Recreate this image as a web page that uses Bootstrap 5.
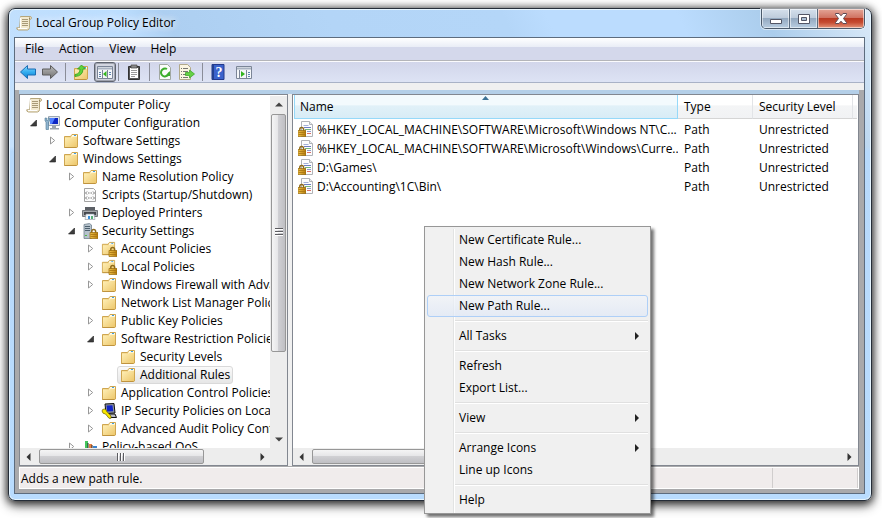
<!DOCTYPE html>
<html lang="en">
<head>
<meta charset="utf-8">
<meta name="viewport" content="width=device-width, initial-scale=1">
<title>Local Group Policy Editor</title>
<link href="https://cdn.jsdelivr.net/npm/bootstrap@5.3.0/dist/css/bootstrap.min.css" rel="stylesheet">
<style>
  body { font: 12px/18px "Open Sans", "Noto Sans", sans-serif; color: #000; background: #fff; padding: 8px 10px 17px 8px; }
  svg { display: block; flex: none; }
  button { color: inherit; border: 0; padding: 0; background: none; }
  ul { list-style: none; margin: 0; padding: 0; }
  .ico { width: 16px; height: 16px; }

  /* window frame */
  .win { border: 1px solid #252d38; border-radius: 7px; padding: 0 6px 6px 5px; box-shadow: inset 0 0 0 1px #e6f5ff, 0 1px 9px 1px rgba(0,0,0,.75), 0 5px 12px rgba(0,0,0,.45);
    background: linear-gradient(#dcedfd00 28%, #b7d9fb 29%, #b9dcfe), linear-gradient(65deg, #d9ecfd 0 5%, #c3e0fd 17%, #bcdefe 31%, #adcff1 35%, #b3d5f7 50%, #b4d6f8 66%, #bbdcfe 70%, #bbdcfe 82%, #abcdec 90%, #dbeaf8); }
  .titlebar { height: 28px; padding-left: 2px; }
  .titlebar h1 { font-size: 12px; line-height: 28px; font-weight: 400; margin: 0; text-shadow: 0 0 8px #fff, 0 0 8px #fff; }
  .caps { height: 20px; border: 1px solid #4b5a6b; border-top: 0; border-radius: 0 0 5px 5px; box-shadow: 0 0 0 1px #ffffff88; overflow: hidden; }
  .caps button { width: 28px; display: flex; align-items: center; justify-content: center; background: linear-gradient(#d5e0ec, #bdcbdb 48%, #94a9c0 50%, #b8cde1); box-shadow: inset 0 0 0 1px #ffffff88; border-right: 1px solid #5b6c7f; }
  .caps .cap-close { width: 46px; border: 0; background: linear-gradient(#e4a698, #cf705f 48%, #b93a23 50%, #c54a30 70%, #e3957a); }
  .client { border: 1px solid #5d6c7e; background: #a9a9ab; min-height: 0; }

  /* menu bar and toolbar */
  .menubar { height: 23px; padding-left: 3px; border-bottom: 1px solid #b4b5b9; background: linear-gradient(#fff, #e9edf6 9px, #d4d8eb 9px, #d4d8eb); }
  .menubar button { padding: 1px 7px 0; margin-right: 1px; }
  .tools { height: 23px; padding: 0 2px; border-top: 1px solid #fbfbfd; border-bottom: 1px solid #a9b2c6; background: linear-gradient(#d2d6ea, #dde3f4); }
  .tools button { display: flex; width: 22px; height: 20px; padding-top: 1px; align-items: center; justify-content: center; }
  .tools button[aria-pressed="true"] { margin: 0 2px; padding: 0; border: 1px solid #5f646f; border-radius: 3px; background: #d3d6e0; box-shadow: inset 0 0 0 1px #9fa3ae; }
  .tools .split { width: 1px; height: 18px; background: #8a8d98; }
  .strip { height: 7px; background: #f0f0f0; }
  .panes { min-height: 0; padding: 0 5px 0 4px; gap: 4px; background: linear-gradient(90deg, #a9a9ab 4px, transparent 4px calc(100% - 5px), #a9a9ab calc(100% - 5px)), linear-gradient(#b4cfe8 4px, #f0f0f0 4px); }
  .pane { margin-top: 4px; border: 1px solid #828790; background: #fff; min-height: 0; overflow: hidden; }
  .pane-tree { width: 269px; flex: none; }

  /* tree */
  .tree-view { min-height: 0; overflow: hidden; padding: 1px 0 0 1px; }
  .tree-view ul ul { padding-left: 19px; }
  .tree-view > ul > li > ul { padding-left: 9px; }
  .node { height: 18px; white-space: nowrap; }
  .node a { display: flex; align-items: center; height: 18px; gap: 4px; padding: 0 2px; border: 1px solid transparent; border-radius: 3px; color: #000; text-decoration: none; }
  .node a.picked { border-color: #d9d9d9; background: linear-gradient(#fafafa, #e6e6e6); }
  .twist { width: 11px; height: 18px; flex: none; display: flex; align-items: center; }
  .twist svg { width: 8px; height: 9px; }

  /* scroll bars */
  .sb { background: #ededed; flex: none; }
  .sb button { display: flex; align-items: center; justify-content: center; width: 17px; height: 17px; }
  .sb-v { width: 17px; margin-top: 1px; }
  .sb-h { height: 17px; }
  .grip { border: 1px solid #979797; border-radius: 2px; display: flex; align-items: center; justify-content: center; }
  .sb-v .grip { margin: 1px; height: 238px; background: linear-gradient(90deg, #f5f5f5, #e6e6e8 45%, #cfcfd3 50%, #bfbfc3); }
  .sb-h .grip { margin: 1px 0 1px 2px; width: 165px; background: linear-gradient(#f5f5f5, #e6e6e8 45%, #d0d0d3 50%, #bfbfc3); }
  .sb-h .grip.wide { width: 290px; }

  /* list */
  .list-view { padding: 0 1px; min-height: 0; }
  .rules { width: 100%; table-layout: fixed; border-collapse: separate; border-spacing: 0; margin: 0; }
  .rules th { position: relative; height: 24px; padding: 2px 0 0 6px; font-weight: 400; line-height: 18px; background: linear-gradient(#fff 45%, #f4f5f6 46%, #f1f2f4); border-bottom: 1px solid #d5d5d5; border-right: 1px solid #e2e4e7; }
  .rules th.by { background: linear-gradient(#f3fafd 45%, #e1f1f8 46%, #d8ecf6); border: 1px solid #96d9f9; border-top: 0; padding-left: 5px; }
  .rules th.by svg { position: absolute; top: 1px; left: 50%; margin-left: -4px; }
  .rules td { height: 19px; padding: 0 0 0 6px; line-height: 19px; white-space: nowrap; overflow: hidden; }
  .rules td:first-child { padding-left: 4px; }
  .rules td:first-child div { gap: 3px; }
  .rules tbody::before { content: ""; display: block; height: 1px; }
  .c-type { width: 75px; } .c-level { width: 100px; } .c-end { width: 4px; }

  /* status bar */
  .status { margin: 1px 5px 4px 4px; height: 22px; border: 1px solid #fff; background: #f0ecec; }
  .status span { padding-left: 1px; line-height: 21px; }
  .status .cell { border-right: 1px solid #d0cdcd; }
  .status .cell-end { width: 85px; }

  /* context menu */
  .ctx.dropdown-menu { --bs-dropdown-font-size: 12px; position: absolute; left: 424px; top: 226px; width: 227px; min-width: 0; padding: 2px; border: 1px solid #979797; border-radius: 0; box-shadow: 3px 3px 3px #0000008c; color: #000;
    background: linear-gradient(90deg, #f1f1f1 26px, #e2e3e3 26px 27px, #fff 27px 28px, #f0f0f0 28px) 2px 2px no-repeat #f0f0f0; }
  .ctx .dropdown-item { display: flex; justify-content: space-between; align-items: center; height: 22px; padding: 0 6px 0 31px; line-height: 20px; color: #000; border: 1px solid transparent; border-radius: 3px; background: none; }
  .ctx .dropdown-item.hot { border-color: #aecff7; background: linear-gradient(#f1f4f9b0, #dfe8f7b0); }
  .ctx .dropdown-divider { height: 2px; margin: 3px 0 3px 28px; border-top: 1px solid #e0e0e0; background: #fff; opacity: 1; }
</style>
<script src="https://cdn.jsdelivr.net/npm/bootstrap@5.3.0/dist/js/bootstrap.bundle.min.js"></script>
</head>
<body class="vh-100 overflow-hidden">
<svg width="0" height="0" class="position-absolute" aria-hidden="true">
  <defs>
    <linearGradient id="gf" x2="1" y2="1"><stop stop-color="#fff0b8"/><stop offset="1" stop-color="#edc76b"/></linearGradient>
    <linearGradient id="gb" x2="0" y2="1"><stop stop-color="#8fdcff"/><stop offset=".5" stop-color="#35aef0"/><stop offset="1" stop-color="#0b7fd0"/></linearGradient>
    <linearGradient id="gg" x2="0" y2="1"><stop stop-color="#bbb"/><stop offset="1" stop-color="#707070"/></linearGradient>
    <linearGradient id="gl" x2="1" y2="0"><stop stop-color="#f0c44c"/><stop offset="1" stop-color="#b57b0a"/></linearGradient>
  </defs>
  <symbol id="scroll" viewBox="0 0 16 16"><path d="M4.500 1.500h9.500q1.500 0 1.500 1.500t-2 1.500v8q0 2-2 2.500h-9q-2-.3-1.800-2.200h3z" fill="#f3ead0" stroke="#b5a67c"/><path d="M4.500 2.500v10.500M2 13.500h9" stroke="#fff" fill="none"/><path d="M6 4.500h6M6 6.500h6M6 8.500h6M6 10.500h6" stroke="#a89a78"/><path d="M13.500 4.500v-2" stroke="#94855c"/></symbol>
  <symbol id="folder" viewBox="0 0 16 16"><path d="M1.500 3.500h6l1.500-2h5.500v12.500l-1 .5h-12z" fill="#f0cf7c" stroke="#cfa650"/><path d="M9 2h5v3H8z" fill="#fffbe8"/><path d="M11 2.500h2" stroke="#3e9fe8"/><path d="M2 4.500h6.500l1-.8h4.500v10.300H2z" fill="url(#gf)"/><path d="M1.500 14.500h12" stroke="#bf933e"/></symbol>
  <symbol id="padlock" viewBox="0 0 16 16"><path d="M9.800 10V8.300q0-1.800 1.900-1.800t1.900 1.800V10" fill="none" stroke="#8e6b1c" stroke-width="1.500"/><path d="M8 9.500h8v6H8z" fill="url(#gl)" stroke="#96680c" stroke-width=".7"/><path d="M8.500 11.500h7M8.500 13.500h7" stroke="#a87312" stroke-width=".8"/></symbol>
  <symbol id="lockfolder" viewBox="0 0 16 16"><use href="#folder" width="15" height="15"/><use href="#padlock"/></symbol>
  <symbol id="computer" viewBox="0 0 16 16"><path d="M4.500 1.500h11v9h-11z" fill="#dfe4ea" stroke="#9ea9b5"/><path d="M6 3h8v6H6z" fill="#0c26c4"/><path d="M6 3h5L8 9H6z" fill="#4f7fff"/><path d="M8 11h4v2H8zM6 13h9v1.500H6z" fill="#9aa4ae"/><path d="M1 3v3l1 1v7.500h2.500V7l1-1V3H4v2.500H2.500V3z" fill="#8fb4cf" stroke="#4f7896" stroke-width=".6"/></symbol>
  <symbol id="script" viewBox="0 0 16 16"><path d="M2.500 1.500h9l2 2v11h-11z" fill="#fcfcfc" stroke="#a3a3a3"/><path d="M5 4.500L3.500 6 5 7.500M11 4.500L12.500 6 11 7.500M6 6h1.500M8.500 6H10M5 9.500L3.500 11 5 12.500M11 9.500l1.500 1.500-1.500 1.500M6 11h1.500M8.500 11H10" fill="none" stroke="#777"/></symbol>
  <symbol id="printer" viewBox="0 0 16 16"><path d="M3 2h10v4H3z" fill="#5c6066"/><path d="M.5 5.500h15v6H.5z" fill="#a3a6aa" stroke="#74777c"/><path d="M2 7h12v3H2z" fill="#45484d"/><path d="M4 9h8l1 5.500H3z" fill="#f3f8fc" stroke="#8e969e" stroke-width=".6"/><path d="M6 11h2v3H6z" fill="#3a8ed8"/><path d="M9 11h2v3H9z" fill="#58b078"/></symbol>
  <symbol id="server" viewBox="0 0 16 16"><path d="M2 1.500L7.500.500 9.500 2v13.500H2z" fill="#b5c2cc" stroke="#71818e" stroke-width=".8"/><path d="M3 3.500h5M3 5.500h5M3 7.500h5" stroke="#4d606e"/><path d="M3 12.500h2" stroke="#4cbb40"/><use href="#padlock"/></symbol>
  <symbol id="ipsec" viewBox="0 0 16 16"><path d="M4 1l9-.5 1 9.500-9 .5z" fill="#8e94a0" stroke="#111"/><path d="M5.500 2.500l6-.3.700 6-6 .3z" fill="#1024c8"/><path d="M7 11h7l1.500 3.500H8z" fill="#b9bcc4" stroke="#111"/><path d="M1 8q0-2 2.500-2 2 .3 2 2.200L10 13v2.300H8L4.500 11Q1.500 11 1 8z" fill="#f7e600" stroke="#6b6200" stroke-width=".7"/></symbol>
  <symbol id="qos" viewBox="0 0 16 16"><path d="M3 2h3v13H3z" fill="#43c65c"/><path d="M7 5h3v10H7z" fill="#e58143"/><path d="M11 7h4v8h-4z" fill="#3b83cf"/><path d="M6 4v11M10 6v9" stroke="#222"/></symbol>
  <symbol id="rule" viewBox="0 0 16 16"><path d="M3.500.500h8l3 3v12h-11z" fill="#fdfdfd" stroke="#b0b3b7"/><path d="M11.500.500v3h3" fill="#e8ebee" stroke="#b0b3b7"/><path d="M5.500 4.500h5" stroke="#a3afd6"/><path d="M6 6.500h7" stroke="#6a7dc4"/><path d="M7 8.500h6" stroke="#74b57b"/><path d="M9 10.500h4" stroke="#8d98c8"/><path d="M9 12.500h4" stroke="#da6f67"/><use href="#padlock" x="-8"/></symbol>
  <symbol id="closed" viewBox="0 0 8 9"><path d="M1.500 1v7L5.700 4.500z" fill="#fff" stroke="#989898"/></symbol>
  <symbol id="open" viewBox="0 0 8 9"><path d="M6.500 2v6H.500z" fill="#3c3c3c" stroke="#1e1e1e" stroke-width=".6"/></symbol>
  <symbol id="tri" viewBox="0 0 8 8"><path d="M2 0v8l4-4z" fill="#222"/></symbol>
</svg>

<div class="win h-100 d-flex flex-column">
  <header class="titlebar d-flex">
    <svg class="ico align-self-center me-1"><use href="#scroll"/></svg>
    <h1 class="flex-grow-1">Local Group Policy Editor</h1>
    <div class="caps d-flex">
      <button aria-label="Minimize"><svg width="12" height="12"><path d="M.500 6.500h11v4H.500z" fill="#fff" stroke="#535666"/></svg></button>
      <button aria-label="Maximize"><svg width="12" height="10"><path d="M.500.500h11v9H.500z" fill="#fff" stroke="#535666"/><path d="M3.500 3.500h5v3h-5z" fill="#a9bdd2" stroke="#535666"/></svg></button>
      <button class="cap-close" aria-label="Close"><svg width="14" height="11"><path d="M1.500 .500H5L7 2.800 9 .500h3.500v1L9.500 5.500l3 4v1H9L7 8.200 5 10.500H1.500v-1l3-4-3-4z" fill="#fff" stroke="#5f4b54"/></svg></button>
    </div>
  </header>

  <div class="client flex-grow-1 d-flex flex-column">
    <nav class="menubar d-flex" aria-label="Menu">
      <button>File</button><button>Action</button><button>View</button><button>Help</button>
    </nav>
    <div class="tools d-flex align-items-center" role="toolbar" aria-label="Tools">
      <button aria-label="Back"><svg class="ico"><path d="M.500 8L7.500 1.500v3.500h8v6h-8v3.500z" fill="url(#gb)" stroke="#1b6db4"/></svg></button>
      <button aria-label="Forward"><svg class="ico"><path d="M15.500 8L8.500 1.500v3.500h-8v6h8v3.500z" fill="url(#gg)" stroke="#5c5c5c"/></svg></button>
      <span class="split mx-1"></span>
      <button aria-label="Up one level"><svg class="ico"><use href="#folder" y="1"/><path d="M2 10.500Q7 10 7 5H4.500L8.500 1l4 4H10q0 7-8 7.500z" fill="#5fd43b" stroke="#2e9a1b" stroke-width=".8"/></svg></button>
      <button aria-label="Show console tree" aria-pressed="true"><svg class="ico"><path d="M.500 2.500h15v12H.500z" fill="#f5f7fa" stroke="#7b8597"/><path d="M1 4.500h14" stroke="#a9b2c1" stroke-width="2"/><path d="M5.500 6v9M10.500 6v9" stroke="#7b8597"/><path d="M2 8.500h2M2 10.500h2M2 12.500h2M12 8.500h2M12 10.500h2" stroke="#5c82ae"/><path d="M9.500 7v6L6 10z" fill="#33b51e"/></svg></button>
      <span class="split"></span>
      <button class="mx-1" aria-label="Paste"><svg class="ico"><path d="M2.500 2.500h11v13h-11z" fill="#575757" stroke="#333"/><path d="M4 4h8v10H4z" fill="#fff"/><path d="M5 1h6v3H5z" fill="#8a8a8a" stroke="#444" stroke-width=".7"/><path d="M5 6.500h6M5 8.500h6M5 10.500h6M5 12.500h4" stroke="#9a9a9a"/></svg></button>
      <span class="split"></span>
      <button class="ms-1" aria-label="Refresh"><svg class="ico"><path d="M2.500.500h8l3 3v12h-11z" fill="#fafcfa" stroke="#a1a8a1"/><path d="M12 8.500a4 4 0 1 1-2-3.500" fill="none" stroke="#3cae2c" stroke-width="2"/><path d="M8 12h5V7z" fill="#3cae2c"/></svg></button>
      <button aria-label="Export list"><svg class="ico"><path d="M.500.500h8l3 3v12H.500z" fill="#fbf6e2" stroke="#b1a98a"/><path d="M2 4.500h1M4 4.500h5M2 7.500h1M4 7.500h5M2 10.500h1M4 10.500h3M2 13.500h1M4 13.500h5" stroke="#767672"/><path d="M6.500 8.500h4V6l5 4-5 4v-2.500h-4z" fill="#65d145" stroke="#35a020" stroke-width=".7"/></svg></button>
      <span class="split mx-1"></span>
      <button aria-label="Help"><svg class="ico"><path d="M2 .500h12v15H2z" fill="#3a62cc" stroke="#22388c"/><path d="M2 .500h2v15H2z" fill="#23408f"/><text x="9" y="13" text-anchor="middle" font-family="Liberation Serif, serif" font-weight="700" font-size="14" fill="#fff">?</text></svg></button>
      <button class="ms-1" aria-label="Show action pane"><svg class="ico"><path d="M.500 2.500h15v12H.500z" fill="#f5f7fa" stroke="#7b8597"/><path d="M1 4.500h14" stroke="#a9b2c1" stroke-width="2"/><path d="M3.500 6v9M10.500 6v9" stroke="#7b8597"/><path d="M12 8.500h2M12 10.500h2M12 12.500h2" stroke="#5c82ae"/><path d="M5 7v6l4-3z" fill="#33b51e"/></svg></button>
    </div>
    <div class="strip"></div>

    <main class="panes flex-grow-1 d-flex">
      <section class="pane pane-tree d-flex flex-column" aria-label="Console tree">
        <div class="d-flex flex-grow-1 overflow-hidden">
          <nav class="tree-view flex-grow-1">
            <ul>
              <li><div class="node d-flex"><a class="ps-1" href="#"><svg class="ico"><use href="#scroll"/></svg>Local Computer Policy</a></div>
              <ul>
                <li><div class="node d-flex"><button class="twist" aria-label="Collapse"><svg><use href="#open"/></svg></button><a href="#"><svg class="ico"><use href="#computer"/></svg>Computer Configuration</a></div>
                <ul>
                  <li><div class="node d-flex"><button class="twist" aria-label="Expand"><svg><use href="#closed"/></svg></button><a href="#"><svg class="ico"><use href="#folder"/></svg>Software Settings</a></div></li>
                  <li><div class="node d-flex"><button class="twist" aria-label="Collapse"><svg><use href="#open"/></svg></button><a href="#"><svg class="ico"><use href="#folder"/></svg>Windows Settings</a></div>
                  <ul>
                    <li><div class="node d-flex"><button class="twist" aria-label="Expand"><svg><use href="#closed"/></svg></button><a href="#"><svg class="ico"><use href="#folder"/></svg>Name Resolution Policy</a></div></li>
                    <li><div class="node d-flex"><span class="twist"></span><a href="#"><svg class="ico"><use href="#script"/></svg>Scripts (Startup/Shutdown)</a></div></li>
                    <li><div class="node d-flex"><button class="twist" aria-label="Expand"><svg><use href="#closed"/></svg></button><a href="#"><svg class="ico"><use href="#printer"/></svg>Deployed Printers</a></div></li>
                    <li><div class="node d-flex"><button class="twist" aria-label="Collapse"><svg><use href="#open"/></svg></button><a href="#"><svg class="ico"><use href="#server"/></svg>Security Settings</a></div>
                    <ul>
                      <li><div class="node d-flex"><button class="twist" aria-label="Expand"><svg><use href="#closed"/></svg></button><a href="#"><svg class="ico"><use href="#lockfolder"/></svg>Account Policies</a></div></li>
                      <li><div class="node d-flex"><button class="twist" aria-label="Expand"><svg><use href="#closed"/></svg></button><a href="#"><svg class="ico"><use href="#lockfolder"/></svg>Local Policies</a></div></li>
                      <li><div class="node d-flex"><button class="twist" aria-label="Expand"><svg><use href="#closed"/></svg></button><a href="#"><svg class="ico"><use href="#folder"/></svg>Windows Firewall with Adva</a></div></li>
                      <li><div class="node d-flex"><span class="twist"></span><a href="#"><svg class="ico"><use href="#folder"/></svg>Network List Manager Polici</a></div></li>
                      <li><div class="node d-flex"><button class="twist" aria-label="Expand"><svg><use href="#closed"/></svg></button><a href="#"><svg class="ico"><use href="#folder"/></svg>Public Key Policies</a></div></li>
                      <li><div class="node d-flex"><button class="twist" aria-label="Collapse"><svg><use href="#open"/></svg></button><a href="#"><svg class="ico"><use href="#folder"/></svg>Software Restriction Policies</a></div>
                      <ul>
                        <li><div class="node d-flex"><span class="twist"></span><a href="#"><svg class="ico"><use href="#folder"/></svg>Security Levels</a></div></li>
                        <li><div class="node d-flex"><span class="twist"></span><a href="#" class="picked" aria-current="true"><svg class="ico"><use href="#folder"/></svg>Additional Rules</a></div></li>
                      </ul></li>
                      <li><div class="node d-flex"><button class="twist" aria-label="Expand"><svg><use href="#closed"/></svg></button><a href="#"><svg class="ico"><use href="#folder"/></svg>Application Control Policies</a></div></li>
                      <li><div class="node d-flex"><button class="twist" aria-label="Expand"><svg><use href="#closed"/></svg></button><a href="#"><svg class="ico"><use href="#ipsec"/></svg>IP Security Policies on Local</a></div></li>
                      <li><div class="node d-flex"><button class="twist" aria-label="Expand"><svg><use href="#closed"/></svg></button><a href="#"><svg class="ico"><use href="#folder"/></svg>Advanced Audit Policy Conf</a></div></li>
                    </ul></li>
                    <li><div class="node d-flex"><button class="twist" aria-label="Expand"><svg><use href="#closed"/></svg></button><a href="#"><svg class="ico"><use href="#qos"/></svg>Policy-based QoS</a></div></li>
                  </ul></li>
                </ul></li>
              </ul></li>
            </ul>
          </nav>
          <div class="sb sb-v d-flex flex-column">
            <button aria-label="Scroll up"><svg width="8" height="5"><path d="M0 4.500h8L4 .500z" fill="#444"/></svg></button>
            <div class="grip"><svg width="8" height="9"><path d="M0 .500h8M0 3.500h8M0 6.500h8" stroke="#5c5c60"/><path d="M0 1.500h8M0 4.500h8M0 7.500h8" stroke="#fff"/></svg></div>
            <button class="mt-auto" aria-label="Scroll down"><svg width="8" height="5"><path d="M0 .500h8L4 4.500z" fill="#444"/></svg></button>
          </div>
        </div>
        <div class="sb sb-h d-flex pe-3">
          <button aria-label="Scroll left"><svg width="5" height="8"><path d="M4.500 0v8L.500 4z" fill="#333"/></svg></button>
          <div class="grip"><svg width="9" height="8"><path d="M.500 0v8M3.500 0v8M6.500 0v8" stroke="#5c5c60"/><path d="M1.500 0v8M4.500 0v8M7.500 0v8" stroke="#fff"/></svg></div>
          <button class="ms-auto" aria-label="Scroll right"><svg width="5" height="8"><path d="M.500 0v8l4-4z" fill="#333"/></svg></button>
        </div>
      </section>

      <section class="pane flex-grow-1 d-flex flex-column" aria-label="Rules">
        <div class="list-view flex-grow-1">
          <table class="rules">
            <colgroup><col><col class="c-type"><col class="c-level"><col class="c-end"></colgroup>
            <thead><tr><th class="by" scope="col" aria-sort="ascending">Name<svg width="7" height="4"><path d="M0 4h7L3.500 0z" fill="#3c7296"/></svg></th><th scope="col">Type</th><th scope="col">Security Level</th><th class="p-0 border-end-0"></th></tr></thead>
            <tbody>
              <tr><td><div class="d-flex align-items-center"><svg class="ico"><use href="#rule"/></svg><span>%HKEY_LOCAL_MACHINE\SOFTWARE\Microsoft\Windows NT\C...</span></div></td><td>Path</td><td>Unrestricted</td><td></td></tr>
              <tr><td><div class="d-flex align-items-center"><svg class="ico"><use href="#rule"/></svg><span>%HKEY_LOCAL_MACHINE\SOFTWARE\Microsoft\Windows\Curre...</span></div></td><td>Path</td><td>Unrestricted</td><td></td></tr>
              <tr><td><div class="d-flex align-items-center"><svg class="ico"><use href="#rule"/></svg><span>D:\Games\</span></div></td><td>Path</td><td>Unrestricted</td><td></td></tr>
              <tr><td><div class="d-flex align-items-center"><svg class="ico"><use href="#rule"/></svg><span>D:\Accounting\1C\Bin\</span></div></td><td>Path</td><td>Unrestricted</td><td></td></tr>
            </tbody>
          </table>
        </div>
        <div class="sb sb-h d-flex">
          <button aria-label="Scroll left"><svg width="5" height="8"><path d="M4.500 0v8L.500 4z" fill="#333"/></svg></button>
          <div class="grip wide"></div>
          <button class="ms-auto" aria-label="Scroll right"><svg width="5" height="8"><path d="M.500 0v8l4-4z" fill="#333"/></svg></button>
        </div>
      </section>
    </main>

    <footer class="status d-flex">
      <span class="cell flex-grow-1">Adds a new path rule.</span>
      <span class="cell cell-end"></span>
    </footer>
  </div>
</div>

<div class="ctx dropdown-menu show" role="menu">
  <button class="dropdown-item" role="menuitem">New Certificate Rule...</button>
  <button class="dropdown-item" role="menuitem">New Hash Rule...</button>
  <button class="dropdown-item" role="menuitem">New Network Zone Rule...</button>
  <button class="dropdown-item hot" role="menuitem">New Path Rule...</button>
  <hr class="dropdown-divider">
  <button class="dropdown-item" role="menuitem" aria-haspopup="true">All Tasks<svg width="8" height="8"><use href="#tri"/></svg></button>
  <hr class="dropdown-divider">
  <button class="dropdown-item" role="menuitem">Refresh</button>
  <button class="dropdown-item" role="menuitem">Export List...</button>
  <hr class="dropdown-divider">
  <button class="dropdown-item" role="menuitem" aria-haspopup="true">View<svg width="8" height="8"><use href="#tri"/></svg></button>
  <hr class="dropdown-divider">
  <button class="dropdown-item" role="menuitem" aria-haspopup="true">Arrange Icons<svg width="8" height="8"><use href="#tri"/></svg></button>
  <button class="dropdown-item" role="menuitem">Line up Icons</button>
  <hr class="dropdown-divider">
  <button class="dropdown-item" role="menuitem">Help</button>
</div>
</body>
</html>
